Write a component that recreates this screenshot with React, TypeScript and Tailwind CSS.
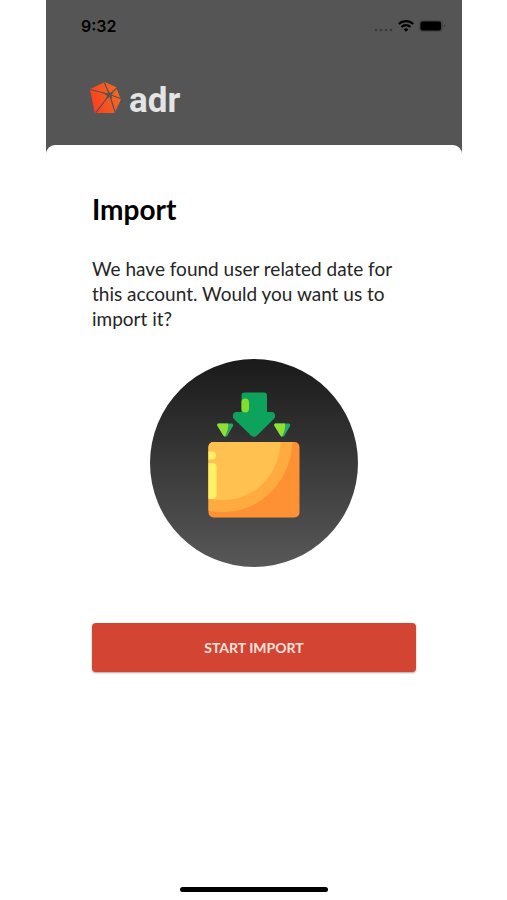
import React from "react";

function StatusBar() {
  return (
    <div className="flex items-center justify-between pt-4 pr-4 pl-[35px] text-black">
      <span className="font-['Inter',sans-serif] text-[16px] leading-5 font-semibold">9:32</span>
      <div className="flex items-center gap-[5px]">
        <svg width="19" height="14" viewBox="0 0 19 14" fill="#393939" aria-hidden="true">
          <circle cx="2" cy="11" r="1.3" />
          <circle cx="7" cy="11" r="1.3" />
          <circle cx="12" cy="11" r="1.3" />
          <circle cx="17" cy="11" r="1.3" />
        </svg>
        <svg width="16" height="14" viewBox="0 0 16 14" aria-label="Wi-Fi" role="img">
          <g fill="none" stroke="#000" strokeWidth="2.1">
            <path d="M.8 5.1a10.2 10.2 0 0 1 14.4 0" />
            <path d="M3.5 8a6.4 6.4 0 0 1 9 0" />
          </g>
          <path d="M8 12.800 5.700 10.400a3.300 3.300 0 0 1 4.600 0z" />
        </svg>
        <svg width="27" height="14" viewBox="0 0 27 14" aria-label="Battery" role="img">
          <rect x=".5" y="1.5" width="23" height="11" rx="3" fill="#444" stroke="#484848" />
          <rect x="1.500" y="2.500" width="20.500" height="9" rx="2" />
          <path d="M25 5.200v3.600a2 2 0 0 0 0-3.600" fill="#383838" />
        </svg>
      </div>
    </div>
  );
}

function Logo() {
  return (
    <div className="flex items-start gap-2 pl-11">
      <svg width="31" height="32" viewBox="0 0 31 32" aria-hidden="true">
        <defs>
          <linearGradient id="gem" x1="0" y1=".7" x2="1" y2=".3">
            <stop offset="0" stopColor="#fb3b20" />
            <stop offset=".5" stopColor="#f45722" />
            <stop offset="1" stopColor="#f46a24" />
          </linearGradient>
        </defs>
        <path
          d="M1 6.500 13.500.8Q15 .2 16.500.8L26 5 30.500 16.500Q31 18 30 19.500L25 30Q24.500 31 23 31H7Q5 31 4.500 29.500L.3 9Q0 7 1 6.500z"
          fill="url(#gem)"
        />
        <path
          d="M19.500 12.500 14.500 1M19.500 12.500.5 7.500M19.500 12.500 27 6M19.500 12.500 30.500 16.500M19.500 12.500 25 30M19.500 12.500 6 30.500"
          fill="none"
          stroke="#595150"
          strokeWidth="1.2"
        />
        <path
          d="m18.500 9 1.500 2.200 3.500-.7-2.200 2.500 1 3.500-2.500-1.700-4.300 3.200 1.500-4.300-4.500-2.700 5 .5z"
          fill="#595150"
        />
      </svg>
      <span className="pt-[3px] font-['Roboto',sans-serif] text-[35px] leading-8 font-bold text-[#e4e4e4]">
        adr
      </span>
    </div>
  );
}

function Chip({ x }: { x: number }) {
  return (
    <g transform={`translate(${x} 64)`}>
      <path d="M1.500.5h13q2.500.5 1.500 2.500L10.500 12.500q-2 2.500-4 0L.5 3Q-.5 1 1.500.5z" fill="#24aa68" />
      <path d="M1.500.5H11q1 5-3 13Q7 13.500 6 12L.5 3Q-.5 1 1.500.5z" fill="#91df35" />
    </g>
  );
}

function ImportIllustration() {
  return (
    <svg
      className="mx-auto mt-7 block"
      width="208"
      height="208"
      viewBox="0 0 208 208"
      role="img"
      aria-label="Import into box"
    >
      <defs>
        <linearGradient id="disc" x1="0" y1="0" x2="0" y2="1">
          <stop offset="0" stopColor="#1a1a1a" />
          <stop offset="1" stopColor="#585858" />
        </linearGradient>
        <clipPath id="box">
          <rect x="58.500" y="83" width="91" height="75.500" rx="5" />
        </clipPath>
      </defs>
      <circle cx="104" cy="104" r="104" fill="url(#disc)" />
      <path
        d="M94.500 33.500H114q3 0 3 3V53h4.500q3.500 0 3.700 4 0 1.500-1.200 2.700L107 76.500q-3 2.500-6 0L84 60q-1.300-1.400-1.200-3 .3-4 3.700-4h5V36.500q0-3 3-3z"
        fill="#0da35c"
      />
      <rect x="91.500" y="39.500" width="7.500" height="14" rx="3.700" fill="#84dc2c" />
      <Chip x={67} />
      <Chip x={124} />
      <g clipPath="url(#box)">
        <path d="M58 82h92v77H58z" fill="#ff9135" />
        <path d="M58 82h84.500C141 122 111 153 73 153q-8 0-15-1.500z" fill="#ffab40" />
        <path d="M58 82h72.500c-1 33-25 59-57 59q-8 0-15.500-1.500z" fill="#ffc250" />
        <path d="M58 92.500h4q4 0 4 4t-4 4h-4zM58 104h4.500q4 0 4 4v28q0 4-4 4H58z" fill="#fff066" />
      </g>
    </svg>
  );
}

export default function App() {
  return (
    <div className="flex min-h-screen flex-col bg-white pr-[45px] pl-[46px] font-['Lato',sans-serif]">
      <header className="flex h-[154px] flex-col gap-[46px] bg-[#555555]">
        <StatusBar />
        <Logo />
      </header>
      <main className="-mt-[9px] grow rounded-t-[9px] bg-white px-[46px] pt-12">
        <h1 className="text-[28px] leading-8 font-bold text-black">Import</h1>
        <p className="mt-[31px] text-[19px] leading-[25px] text-[#252525]">
          We have found user related date for this account. Would you want us to import it?
        </p>
        <ImportIllustration />
        <button
          type="button"
          className="mt-14 h-[49px] w-full rounded-[4px] bg-[#d34432] text-[14px] font-bold text-[#fbe3df] shadow-[0_1px_2px_rgba(0,0,0,0.35)]"
        >
          START IMPORT
        </button>
      </main>
      <div className="mx-auto mb-2 h-[5px] w-[148px] rounded-full bg-black" />
    </div>
  );
}
